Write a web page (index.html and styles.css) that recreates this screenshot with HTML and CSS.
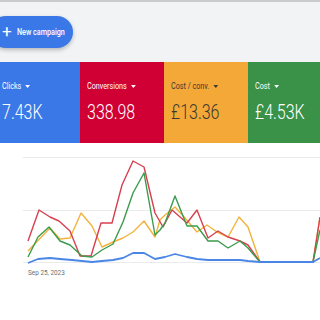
FILE: index.html
```html
<html>
  <head>
    <meta charset="UTF-8" />
    <title>Campaigns</title>
    <link rel="stylesheet" href="styles.css">
  </head>
  <body>
    <div class="top-line"></div>

    <div class="toolbar">
      <div class="new-button">
        <span class="plus">+</span>
        <span class="squeeze">New campaign</span>
      </div>
    </div>

    <div class="cards">
      <div class="card blue first">
        <div class="label"><span class="squeeze">Clicks<span class="caret"></span></span></div>
        <div class="value"><span class="squeeze">7.43K</span></div>
      </div>
      <div class="card red">
        <div class="label"><span class="squeeze">Conversions<span class="caret"></span></span></div>
        <div class="value"><span class="squeeze">338.98</span></div>
      </div>
      <div class="card orange">
        <div class="label"><span class="squeeze">Cost / conv.<span class="caret"></span></span></div>
        <div class="value"><span class="squeeze">£13.36</span></div>
      </div>
      <div class="card green">
        <div class="label"><span class="squeeze">Cost<span class="caret"></span></span></div>
        <div class="value"><span class="squeeze">£4.53K</span></div>
      </div>
    </div>

    <div class="chart">
      <svg class="plot" width="320" height="124" viewBox="0 143 320 124">
        <line class="grid" x1="23" y1="157.5" x2="320" y2="157.5" />
        <line class="grid" x1="23" y1="210.5" x2="320" y2="210.5" />
        <line class="grid" x1="23" y1="262.5" x2="320" y2="262.5" />

        <polyline class="series s-orange" points="28,251 50,228 60,239 70,238 81,213 92,226 102,247 113,242 123,238 133,232 144,221 155,237 160,220 165,215 175,207 185,218 197,232 207,225 217,232 228,237 239,217 248,227 260,262 313,262 320,217" />
        <polyline class="series s-red" points="28,241 39,210 50,217 59,221 70,231 80,256 91,256 101,223 112,223 122,185 133,161 144,167 155,213 163,227 172,210 187,223 197,210 208,238 218,231 228,237 240,241 248,245 260,262 313,262 320,217" />
        <polyline class="series s-green" points="28,257 38,237 49,227 60,241 70,245 82,256 92,257 102,250 113,244 123,222 133,193 144,173 155,235 160,230 165,223 175,196 187,226 197,226 208,241 218,241 228,248 240,241 248,248 260,262 313,262 320,230" />
        <polyline class="series s-blue" points="28,263 38,259 50,258 60,259 72,260 82,261 92,262 102,261 113,260 123,258 133,253 144,253 155,259 165,257 175,254 187,257 197,259 208,260 218,260 240,260 248,261 260,262 313,262 320,258" />
      </svg>
      <div class="date"><span class="squeeze">Sep 25, 2023</span></div>
    </div>
  </body>
</html>
```

FILE: styles.css
```css
body {
  margin: 0;
  width: 320px;
  height: 320px;
  overflow: hidden;
  background-color: #fff;
  font-family: Roboto, "Liberation Sans", sans-serif;
}

.squeeze {
  display: inline-block;
  transform: scaleX(0.8);
  transform-origin: left center;
  white-space: nowrap;
}

.top-line {
  height: 2px;
  background-color: #c9cbcd;
}

.toolbar {
  height: 60px;
  padding-top: 14px;
  box-sizing: border-box;
  background-color: #f1f3f4;
}

.new-button {
  display: flex;
  align-items: center;
  width: 83px;
  height: 32px;
  margin-left: -10px;
  padding-left: 12px;
  box-sizing: border-box;
  border-radius: 16px;
  background-color: #3b78e7;
  color: #fff;
  font-size: 9px;
  font-weight: 500;
  box-shadow: 0 2px 4px rgba(0, 0, 0, 0.25);
}

.plus {
  font-size: 17px;
  font-weight: 400;
  line-height: 1;
  margin-right: 5px;
  margin-top: -2px;
}

.cards {
  display: grid;
  grid-template-columns: 80px 84px 84px 72px;
  height: 81px;
}

.card {
  padding-left: 7px;
  padding-top: 19px;
  color: #fff;
}

.card.first {
  padding-left: 2px;
}

.blue {
  background-color: #3b78e7;
}

.red {
  background-color: #d10034;
}

.orange {
  background-color: #f3a838;
  color: #3d3a33;
}

.orange .caret {
  border-top-color: #3d3a33;
}

.green {
  background-color: #3a9148;
}

.label {
  font-size: 9px;
  line-height: 10px;
  height: 10px;
}

.caret {
  display: inline-block;
  width: 0;
  height: 0;
  margin-left: 5px;
  vertical-align: 1px;
  border-left: 3px solid transparent;
  border-right: 3px solid transparent;
  border-top: 3.5px solid #fff;
}

.value {
  margin-top: 11px;
  font-size: 20px;
  font-weight: 300;
  line-height: 21px;
}

.chart {
  background-color: #fff;
}

.plot {
  display: block;
}

.grid {
  stroke: #ebebeb;
  stroke-width: 1;
}

.series {
  fill: none;
  stroke-width: 1.4;
  stroke-linejoin: round;
}

.s-red {
  stroke: #d6404f;
}

.s-green {
  stroke: #3c9a4c;
}

.s-orange {
  stroke: #f2b33d;
}

.s-blue {
  stroke: #4a86e6;
  stroke-width: 1.8;
}

.date {
  padding-left: 28px;
  margin-top: 1px;
  font-size: 8px;
  line-height: 10px;
  color: #6f6f6f;
}
```
